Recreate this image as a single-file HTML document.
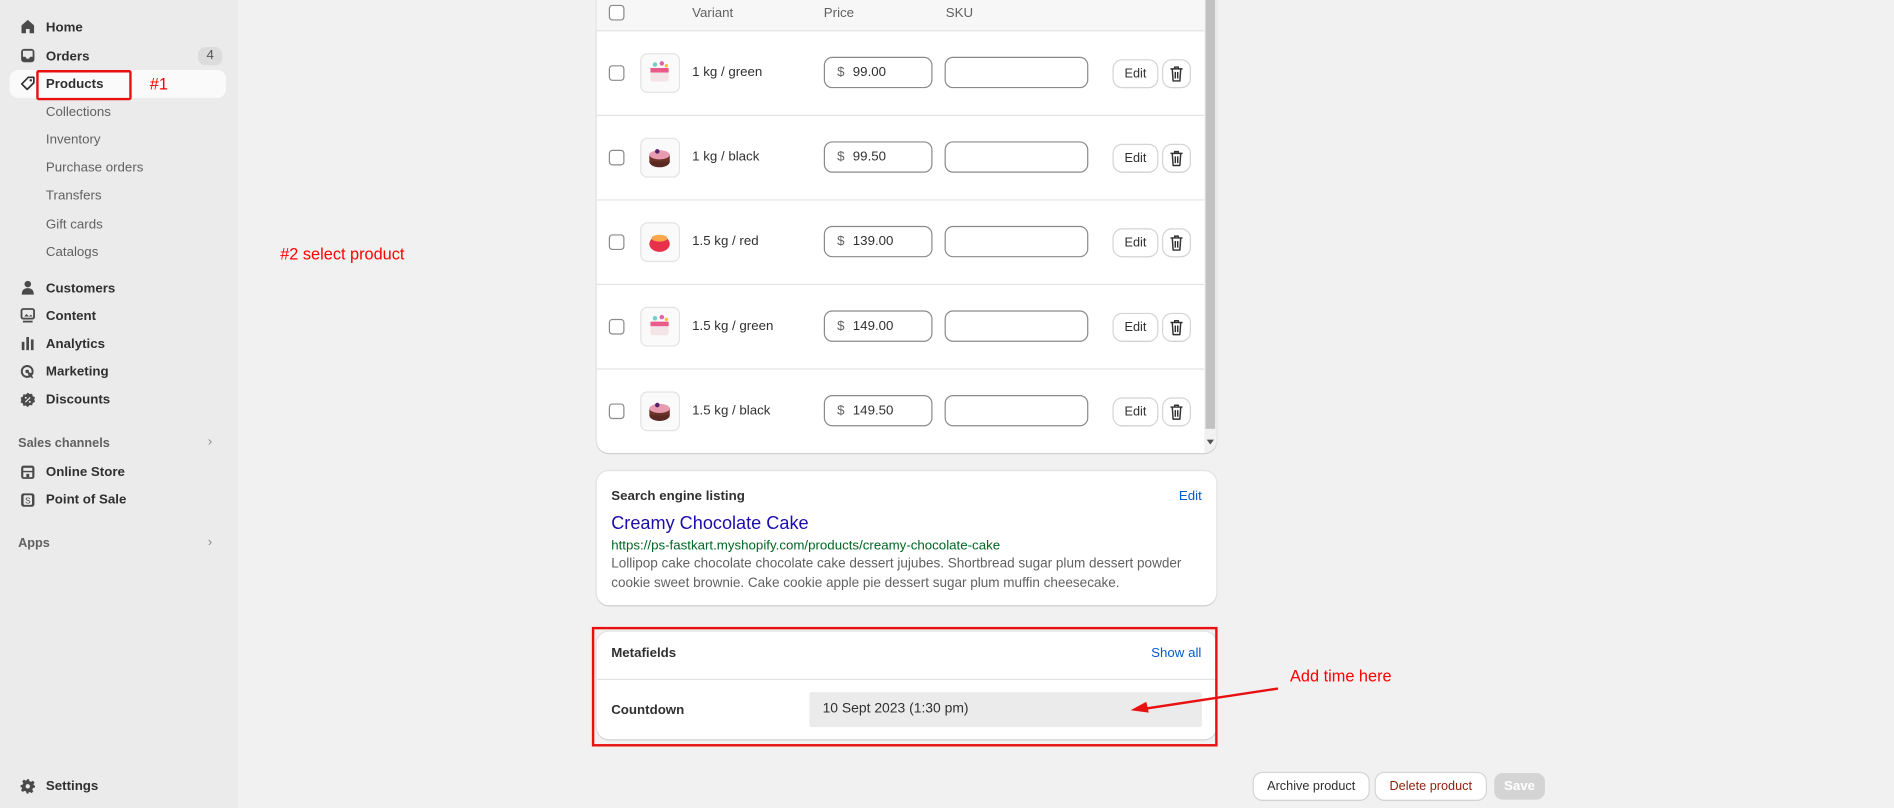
<!DOCTYPE html>
<html><head><meta charset="utf-8"><style>
*{box-sizing:border-box;margin:0;padding:0}
html,body{width:1894px;height:808px;overflow:hidden;background:#f1f1f1}
#w{position:absolute;left:0;top:0;width:1568px;height:669px;transform:scale(1.20791);transform-origin:0 0;font-family:"Liberation Sans",sans-serif;font-size:11px;color:#303030}
.a{position:absolute}
#sb{left:0;top:0;width:197px;height:669px;background:#ebebeb}
.ni{position:absolute;left:38px;font-weight:bold;color:#303030;line-height:14px}
.si{position:absolute;left:38px;color:#616161;line-height:14px}
.ic{position:absolute;left:17px;width:12px;height:12px}
.card{position:absolute;background:#fff;border-radius:10px;box-shadow:0 1px 0 #d0d0d0,0 0 0 1px #e3e3e3}
.row{position:absolute;left:0;width:503px;height:70px;border-top:1px solid #e3e3e3}
.cb{position:absolute;left:10px;width:13px;height:13px;border:1px solid #8a8a8a;border-radius:3px;background:#fff}
.th{position:absolute;left:36px;width:33px;height:33px;border:1px solid #e3e3e3;border-radius:6px;background:#fafafa}
.inp{position:absolute;height:26px;border:1px solid #8a8a8a;border-radius:7px;background:#fff}
.btn{position:absolute;height:22px;border-radius:7px;background:#fff;box-shadow:0 0 0 1px #d4d4d4,0 1px 0 #bbb;font-size:10.5px;text-align:center;line-height:22px;color:#303030}
.red{color:#f00;font-size:13.5px}
.tr{position:absolute;left:5px;top:4px}
</style></head><body><div id="w">
<div id="sb" class="a"></div>
<div class="a" style="left:8px;top:58px;width:179px;height:23px;background:#fafafa;border-radius:7px"></div>
<div class="a" style="left:30px;top:58px;width:79px;height:25px;border:2px solid #e81010;border-radius:2px"></div>
<svg class="ic" style="top:16px" viewBox="0 0 12 12"><path d="M6 0.5L0.8 5v6.5h3.7V8h3v3.5h3.7V5z" fill="#4a4a4a"/></svg>
<svg class="ic" style="top:40px" viewBox="0 0 12 12"><rect x="0.5" y="0.5" width="11" height="11" rx="2.5" fill="#4a4a4a"/><path d="M2 2h8v5H8l-1 1.5H5L4 7H2z" fill="#ebebeb"/></svg>
<svg class="ic" style="top:63px" viewBox="0 0 12 12"><path d="M6.5 1H11v4.5L5.5 11 1 6.5z" fill="none" stroke="#303030" stroke-width="1.4" stroke-linejoin="round"/><circle cx="8.5" cy="3.5" r="1" fill="#303030"/></svg>
<svg class="ic" style="top:232px" viewBox="0 0 12 12"><circle cx="6" cy="3.2" r="2.7" fill="#4a4a4a"/><path d="M1 12c0-4 2-5.5 5-5.5s5 1.5 5 5.5z" fill="#4a4a4a"/></svg>
<svg class="ic" style="top:255px" viewBox="0 0 12 12"><rect x="0.8" y="0.8" width="10.4" height="8" rx="1.5" fill="none" stroke="#4a4a4a" stroke-width="1.5"/><path d="M3 7l2-2 2 2 1.5-1.5L10 7z" fill="#4a4a4a"/><rect x="2" y="10.5" width="8" height="1.5" fill="#4a4a4a"/></svg>
<svg class="ic" style="top:278px" viewBox="0 0 12 12"><rect x="1" y="5" width="2.2" height="7" fill="#4a4a4a"/><rect x="4.8" y="1" width="2.2" height="11" fill="#4a4a4a"/><rect x="8.6" y="3" width="2.2" height="9" fill="#4a4a4a"/></svg>
<svg class="ic" style="top:302px" viewBox="0 0 12 12"><circle cx="5.5" cy="5.5" r="4.5" fill="none" stroke="#4a4a4a" stroke-width="1.6"/><circle cx="5.5" cy="5.5" r="1.5" fill="#4a4a4a"/><path d="M6 6l5 1.5-2 1 1.5 2-1 .8-1.5-2-1 1.8z" fill="#4a4a4a"/></svg>
<svg class="ic" style="top:325px" viewBox="0 0 12 12"><path d="M6 0l1.6 1.3 2-.3.5 2 1.9.9-.7 1.9.7 1.9-1.9.9-.5 2-2-.3L6 12l-1.6-1.3-2 .3-.5-2L0 8.1l.7-1.9L0 4.3l1.9-.9.5-2 2 .3z" fill="#4a4a4a"/><path d="M4 8l4-4" stroke="#ebebeb" stroke-width="1"/><circle cx="4.3" cy="4.3" r=".8" fill="#ebebeb"/><circle cx="7.7" cy="7.7" r=".8" fill="#ebebeb"/></svg>
<svg class="ic" style="top:385px" viewBox="0 0 12 12"><rect x="0.5" y="0.5" width="11" height="11" rx="2" fill="#4a4a4a"/><rect x="2.3" y="2.3" width="7.4" height="2.5" fill="#ebebeb"/><rect x="2.3" y="6" width="7.4" height="4" fill="#ebebeb"/><rect x="4.8" y="7.3" width="2.4" height="2.7" fill="#4a4a4a"/></svg>
<svg class="ic" style="top:408px" viewBox="0 0 12 12"><rect x="0.5" y="0.5" width="11" height="11" rx="2" fill="#4a4a4a"/><rect x="2.5" y="2" width="7" height="8" rx="1" fill="#ebebeb"/><text x="6" y="9" font-size="7" text-anchor="middle" fill="#4a4a4a" font-family="Liberation Sans">S</text></svg>
<svg class="ic" style="top:645px" viewBox="0 0 12 12"><path d="M5 0h2l.4 1.7 1.3.6 1.5-.9 1.4 1.4-.9 1.5.6 1.3L12 5v2l-1.7.4-.6 1.3.9 1.5-1.4 1.4-1.5-.9-1.300.6L7 12H5l-.4-1.7-1.3-.6-1.5.9-1.4-1.4.9-1.5-.6-1.3L0 7V5l1.7-.4.6-1.3-.9-1.5 1.4-1.4 1.5.9 1.3-.6z" fill="#4a4a4a"/><circle cx="6" cy="6" r="1.8" fill="#ebebeb"/></svg>
<div class="ni" style="top:16px">Home</div>
<div class="ni" style="top:40px">Orders</div>
<div class="a" style="left:164px;top:39px;width:20px;height:15px;border-radius:6px;background:#dcdcdc;text-align:center;line-height:15px;color:#555">4</div>
<div class="ni" style="top:63px">Products</div>
<div class="a red" style="left:124px;top:62px">#1</div>
<div class="si" style="top:86px">Collections</div>
<div class="si" style="top:109px">Inventory</div>
<div class="si" style="top:132px">Purchase orders</div>
<div class="si" style="top:155px">Transfers</div>
<div class="si" style="top:179px">Gift cards</div>
<div class="si" style="top:202px">Catalogs</div>
<div class="ni" style="top:232px">Customers</div>
<div class="ni" style="top:255px">Content</div>
<div class="ni" style="top:278px">Analytics</div>
<div class="ni" style="top:301px">Marketing</div>
<div class="ni" style="top:324px">Discounts</div>
<div class="a" style="left:15px;top:361px;font-size:10.5px;font-weight:bold;color:#616161">Sales channels</div>
<div class="a" style="left:172px;top:360px;color:#8a8a8a">›</div>
<div class="ni" style="top:384px">Online Store</div>
<div class="ni" style="top:407px">Point of Sale</div>
<div class="a" style="left:15px;top:444px;font-size:10.5px;font-weight:bold;color:#616161">Apps</div>
<div class="a" style="left:172px;top:443px;color:#8a8a8a">›</div>
<div class="ni" style="top:644px">Settings</div>
<div class="a red" style="left:232px;top:203px">#2 select product</div>

<div class="card" style="left:494px;top:-12px;width:513px;height:387px;overflow:hidden">
 <div class="a" style="left:0;top:0;width:503px;height:37px;background:#f7f7f7"></div>
 <div class="cb" style="top:16px"></div>
 <div class="a" style="left:79px;top:17px;color:#616161">Variant</div>
 <div class="a" style="left:188px;top:17px;color:#616161">Price</div>
 <div class="a" style="left:289px;top:17px;color:#616161">SKU</div>
 <div class="a" style="left:503px;top:0;width:10px;height:387px;background:#f1f1f1"></div>
 <div class="a" style="left:504px;top:0;width:8px;height:367px;background:#c1c1c1"></div>
 <div class="a" style="left:505px;top:376px;width:0;height:0;border-left:3px solid transparent;border-right:3px solid transparent;border-top:4px solid #505050"></div>
</div>
<svg width="0" height="0" style="position:absolute"><defs><symbol id="tr" viewBox="0 0 12 14"><path d="M1 3h10M4.5 3V1.5h3V3M2.5 3l.7 10h5.6l.7-10M5 5.5v5.5M7 5.5v5.5" fill="none" stroke="#303030" stroke-width="1.2" stroke-linejoin="round"/></symbol></defs></svg>
<div class="a" style="left:494px;top:25px;width:503px;height:350px">
 <div class="row" style="top:0"><div class="cb" style="top:28px"></div><div class="th" style="top:18px"><svg viewBox="0 0 33 33" width="31" height="31"><rect x="8" y="12" width="16" height="12" rx="2" fill="#f3e4e8"/><rect x="8" y="12" width="16" height="4" fill="#e85a8a"/><circle cx="12" cy="9" r="2" fill="#7cc"/><circle cx="18" cy="8" r="2" fill="#d6a"/><circle cx="22" cy="10" r="1.5" fill="#fb4"/></svg></div><div class="a" style="left:79px;top:28px">1 kg / green</div><div class="inp" style="left:188px;top:21px;width:90px"><span class="a" style="left:10px;top:6px;color:#616161">$</span><span class="a" style="left:23px;top:6px">99.00</span></div><div class="inp" style="left:288px;top:21px;width:119px"></div><div class="btn" style="left:428px;top:24px;width:36px">Edit</div><div class="btn" style="left:469px;top:24px;width:22px"><svg class="tr" width="12" height="14"><use href="#tr"/></svg></div></div>
 <div class="row" style="top:70px"><div class="cb" style="top:28px"></div><div class="th" style="top:18px"><svg viewBox="0 0 33 33" width="31" height="31"><ellipse cx="16" cy="20" rx="9" ry="5" fill="#5a2a22"/><rect x="7" y="14" width="18" height="6" fill="#6b3328"/><ellipse cx="16" cy="14" rx="9" ry="4" fill="#e89aae"/><circle cx="14" cy="11" r="2" fill="#552266"/></svg></div><div class="a" style="left:79px;top:28px">1 kg / black</div><div class="inp" style="left:188px;top:21px;width:90px"><span class="a" style="left:10px;top:6px;color:#616161">$</span><span class="a" style="left:23px;top:6px">99.50</span></div><div class="inp" style="left:288px;top:21px;width:119px"></div><div class="btn" style="left:428px;top:24px;width:36px">Edit</div><div class="btn" style="left:469px;top:24px;width:22px"><svg class="tr" width="12" height="14"><use href="#tr"/></svg></div></div>
 <div class="row" style="top:140px"><div class="cb" style="top:28px"></div><div class="th" style="top:18px"><svg viewBox="0 0 33 33" width="31" height="31"><ellipse cx="16" cy="18" rx="9" ry="7" fill="#e8304a"/><ellipse cx="16" cy="13" rx="7" ry="3" fill="#f8a848"/></svg></div><div class="a" style="left:79px;top:28px">1.5 kg / red</div><div class="inp" style="left:188px;top:21px;width:90px"><span class="a" style="left:10px;top:6px;color:#616161">$</span><span class="a" style="left:23px;top:6px">139.00</span></div><div class="inp" style="left:288px;top:21px;width:119px"></div><div class="btn" style="left:428px;top:24px;width:36px">Edit</div><div class="btn" style="left:469px;top:24px;width:22px"><svg class="tr" width="12" height="14"><use href="#tr"/></svg></div></div>
 <div class="row" style="top:210px"><div class="cb" style="top:28px"></div><div class="th" style="top:18px"><svg viewBox="0 0 33 33" width="31" height="31"><rect x="8" y="12" width="16" height="12" rx="2" fill="#f3e4e8"/><rect x="8" y="12" width="16" height="4" fill="#e85a8a"/><circle cx="12" cy="9" r="2" fill="#7cc"/><circle cx="18" cy="8" r="2" fill="#d6a"/><circle cx="22" cy="10" r="1.5" fill="#fb4"/></svg></div><div class="a" style="left:79px;top:28px">1.5 kg / green</div><div class="inp" style="left:188px;top:21px;width:90px"><span class="a" style="left:10px;top:6px;color:#616161">$</span><span class="a" style="left:23px;top:6px">149.00</span></div><div class="inp" style="left:288px;top:21px;width:119px"></div><div class="btn" style="left:428px;top:24px;width:36px">Edit</div><div class="btn" style="left:469px;top:24px;width:22px"><svg class="tr" width="12" height="14"><use href="#tr"/></svg></div></div>
 <div class="row" style="top:280px"><div class="cb" style="top:28px"></div><div class="th" style="top:18px"><svg viewBox="0 0 33 33" width="31" height="31"><ellipse cx="16" cy="20" rx="9" ry="5" fill="#5a2a22"/><rect x="7" y="14" width="18" height="6" fill="#6b3328"/><ellipse cx="16" cy="14" rx="9" ry="4" fill="#e89aae"/><circle cx="14" cy="11" r="2" fill="#552266"/></svg></div><div class="a" style="left:79px;top:28px">1.5 kg / black</div><div class="inp" style="left:188px;top:21px;width:90px"><span class="a" style="left:10px;top:6px;color:#616161">$</span><span class="a" style="left:23px;top:6px">149.50</span></div><div class="inp" style="left:288px;top:21px;width:119px"></div><div class="btn" style="left:428px;top:24px;width:36px">Edit</div><div class="btn" style="left:469px;top:24px;width:22px"><svg class="tr" width="12" height="14"><use href="#tr"/></svg></div></div>
</div>

<div class="card" style="left:494px;top:390px;width:513px;height:111px">
 <div class="a" style="left:12px;top:15px;font-weight:bold">Search engine listing</div>
 <div class="a" style="left:482px;top:15px;color:#005bd3">Edit</div>
 <div class="a" style="left:12px;top:35px;font-size:15px;color:#1a0dab">Creamy Chocolate Cake</div>
 <div class="a" style="left:12px;top:56px;color:#006621">https://ps-fastkart.myshopify.com/products/creamy-chocolate-cake</div>
 <div class="a" style="left:12px;top:70px;width:495px;line-height:15.5px;color:#616161;font-size:11.2px">Lollipop cake chocolate chocolate cake dessert jujubes. Shortbread sugar plum dessert powder cookie sweet brownie. Cake cookie apple pie dessert sugar plum muffin cheesecake.</div>
</div>

<div class="card" style="left:494px;top:523px;width:513px;height:89px">
 <div class="a" style="left:12px;top:12px;font-weight:bold">Metafields</div>
 <div class="a" style="left:459px;top:12px;color:#005bd3">Show all</div>
 <div class="a" style="left:0;top:39px;width:513px;border-top:1px solid #e3e3e3"></div>
 <div class="a" style="left:12px;top:59px;font-weight:bold;color:#303030">Countdown</div>
 <div class="a" style="left:176px;top:50px;width:325px;height:29px;background:#ebebeb;border-radius:2px;padding:8px 11px;font-size:11.5px">10 Sept 2023 (1:30 pm)</div>
</div>
<div class="a" style="left:490px;top:519px;width:518px;height:99px;border:2px solid #e81010"></div>
<svg class="a" style="left:930px;top:560px" width="140" height="35"><line x1="128" y1="10" x2="16" y2="27" stroke="#e81010" stroke-width="2"/><path d="M6 28l13-7 2 9z" fill="#e81010"/></svg>
<div class="a red" style="left:1068px;top:552px">Add time here</div>

<div class="btn" style="left:1038px;top:640px;width:95px">Archive product</div>
<div class="btn" style="left:1139px;top:640px;width:91px;color:#8e1f0b">Delete product</div>
<div class="a" style="left:1237px;top:640px;width:42px;height:22px;border-radius:7px;background:#d4d4d4;color:#fff;text-align:center;line-height:22px;font-weight:bold">Save</div>
</div></body></html>
